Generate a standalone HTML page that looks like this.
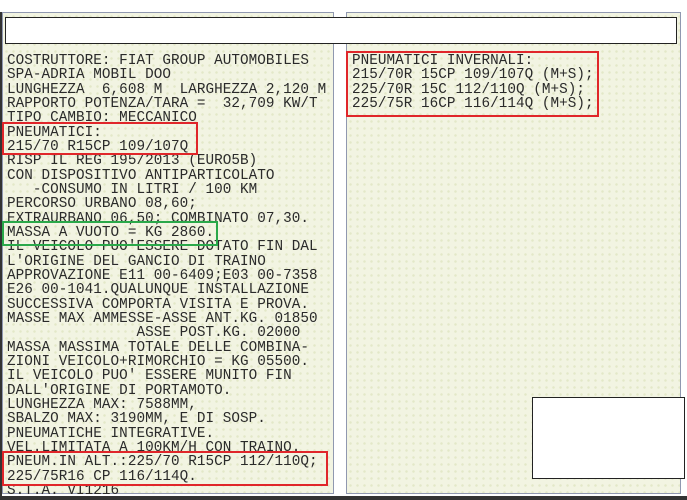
<!DOCTYPE html>
<html><head><style>
body{margin:0;width:687px;height:500px;background:#fff;position:relative;overflow:hidden;font-family:"Liberation Mono",monospace;}
.p{position:absolute;background:#f2f4e2;border:1px solid #9098b0;
background-image:radial-gradient(circle,#e3e8c8 1px,transparent 1.5px);background-size:7px 7px;}
.t{position:absolute;font-size:14.3px;line-height:14.33px;color:#2a2a2a;white-space:pre;letter-spacing:0.05px;}
.b{position:absolute;border:2px solid #e0262a;}
</style></head><body>
<div style="position:absolute;left:0;top:12px;width:2px;height:485px;background:#333"></div>
<div class="p" style="left:2px;top:12px;width:330px;height:480px"></div>
<div class="p" style="left:346px;top:12px;width:333px;height:480px"></div>
<div style="position:absolute;left:5px;top:17px;width:670px;height:25px;background:#fff;border:1px solid #222"></div>
<div class="t" style="left:7px;top:54px">COSTRUTTORE: FIAT GROUP AUTOMOBILES
SPA-ADRIA MOBIL DOO
LUNGHEZZA  6,608 M  LARGHEZZA 2,120 M
RAPPORTO POTENZA/TARA =  32,709 KW/T
TIPO CAMBIO: MECCANICO
PNEUMATICI:
215/70 R15CP 109/107Q
RISP IL REG 195/2013 (EURO5B)
CON DISPOSITIVO ANTIPARTICOLATO
   -CONSUMO IN LITRI / 100 KM
PERCORSO URBANO 08,60;
EXTRAURBANO 06,50; COMBINATO 07,30.
MASSA A VUOTO = KG 2860.
IL VEICOLO PUO'ESSERE DOTATO FIN DAL
L'ORIGINE DEL GANCIO DI TRAINO
APPROVAZIONE E11 00-6409;E03 00-7358
E26 00-1041.QUALUNQUE INSTALLAZIONE
SUCCESSIVA COMPORTA VISITA E PROVA.
MASSE MAX AMMESSE-ASSE ANT.KG. 01850
               ASSE POST.KG. 02000
MASSA MASSIMA TOTALE DELLE COMBINA-
ZIONI VEICOLO+RIMORCHIO = KG 05500.
IL VEICOLO PUO' ESSERE MUNITO FIN
DALL'ORIGINE DI PORTAMOTO.
LUNGHEZZA MAX: 7588MM,
SBALZO MAX: 3190MM, E DI SOSP.
PNEUMATICHE INTEGRATIVE.
VEL.LIMITATA A 100KM/H CON TRAINO.
PNEUM.IN ALT.:225/70 R15CP 112/110Q;
225/75R16 CP 116/114Q.
S.T.A. VI1216</div>
<div style="position:absolute;left:0;top:496px;width:687px;height:4px;background:#333"></div>
<div class="t" style="left:352px;top:54px">PNEUMATICI INVERNALI:
215/70R 15CP 109/107Q (M+S);
225/70R 15C 112/110Q (M+S);
225/75R 16CP 116/114Q (M+S);</div>
<div class="b" style="left:2px;top:122px;width:192px;height:29px"></div>
<div class="b" style="left:2px;top:221px;width:212px;height:21px;border-color:#2aa84a"></div>
<div class="b" style="left:2px;top:451px;width:322px;height:31px"></div>
<div class="b" style="left:346px;top:51px;width:249px;height:62px"></div>
<div style="position:absolute;left:532px;top:397px;width:151px;height:80px;background:#fff;border:1px solid #222"></div>
</body></html>
